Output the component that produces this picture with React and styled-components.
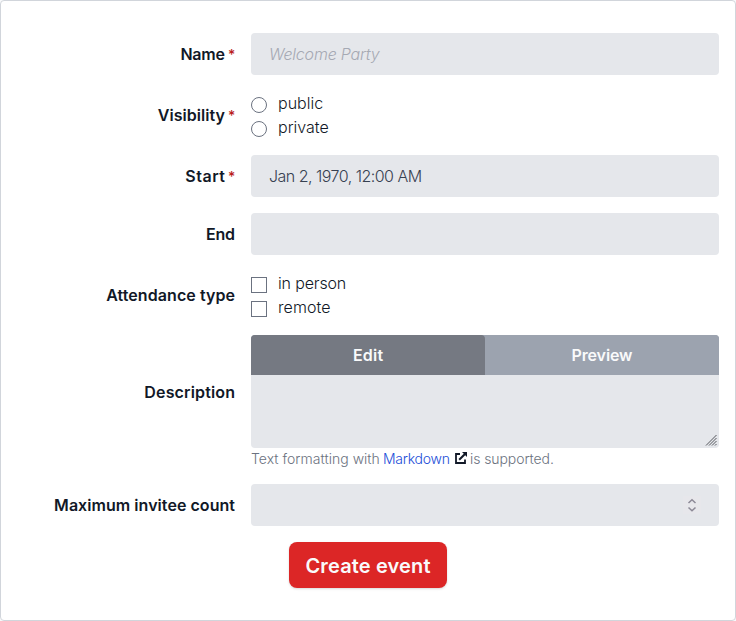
import React from "react";
import styled, { createGlobalStyle } from "styled-components";

const GlobalStyle = createGlobalStyle`
  *, *::before, *::after { box-sizing: border-box; }
  body {
    margin: 0;
    background: #f9fafb;
    color: #111827;
    font-family: Inter, "Liberation Sans", sans-serif;
    font-size: 16px;
    font-weight: 360;
    line-height: 24px;
  }
  input, textarea, button { font: inherit; color: inherit; margin: 0; }
`;

const Card = styled.form`
  display: flex;
  flex-direction: column;
  gap: 16px;
  width: 736px;
  height: 621px;
  padding: 32px 16px;
  border: 1px solid #d1d5db;
  border-radius: 4px;
  background: #fff;
`;

const Row = styled.div`
  display: grid;
  grid-template-columns: 1fr 2fr;
  align-items: center;
`;

const Label = styled.label`
  padding-right: 16px;
  text-align: right;
  font-weight: 600;
  white-space: nowrap;
`;

const Text = styled.span`
  letter-spacing: ${(p) => p.$spacing || 0}px;
  margin-right: ${(p) => -(p.$spacing || 0)}px;
`;

const Star = styled.span`
  display: inline-block;
  width: 7px;
  margin-left: 3px;
  color: #b91c1c;
  font-size: 14px;
  font-weight: 500;
`;

const Input = styled.input`
  display: block;
  width: 100%;
  height: 42px;
  padding: 0 18px;
  border: 0;
  border-radius: 4px;
  outline: 0;
  background: #e5e7eb;
  color: #374151;
  letter-spacing: ${(p) => p.$spacing || 0}px;
  &::placeholder {
    color: #a5a9b3;
    font-style: italic;
    font-weight: 320;
    opacity: 1;
  }
`;

const Options = styled.div`
  display: flex;
  flex-direction: column;
`;

const Option = styled.label`
  display: flex;
  gap: 11px;
  height: 24px;
`;

const Choice = styled.input`
  appearance: none;
  width: 16px;
  height: 16px;
  margin: 6px 0 0;
  border: 1px solid #6b7280;
  border-radius: ${(p) => (p.type === "radio" ? "50%" : "0")};
  background: #fff;
`;

const Tabs = styled.div`
  display: grid;
  grid-template-columns: 1fr 1fr;
  height: 40px;
  border-radius: 4px 4px 0 0;
  background: #9ca3af;
`;

const Tab = styled.button`
  padding: 0;
  border: 0;
  border-radius: 4px 4px 0 0;
  background: ${(p) => (p.$active ? "#757982" : "#9ca3af")};
  color: #f9fafb;
  font-weight: 600;
`;

const EditorFrame = styled.div`
  position: relative;
  height: 73px;
`;

const Editor = styled.textarea`
  display: block;
  width: 100%;
  height: 100%;
  padding: 8px 18px;
  border: 0;
  border-radius: 0 0 4px 4px;
  outline: 0;
  background: #e5e7eb;
  resize: none;
`;

const Grip = styled.svg`
  position: absolute;
  right: 2px;
  bottom: 2px;
  width: 12px;
  height: 12px;
`;

const Field = styled.div`
  display: flex;
  flex-direction: column;
`;

const Described = styled.div`
  display: flex;
  flex-direction: column;
`;

const Help = styled.div`
  display: flex;
  align-items: center;
  height: 20px;
  margin-left: 234px;
  padding-top: 2px;
  color: #6b7280;
  font-size: 14px;
  line-height: 20px;
  white-space: nowrap;
`;

const HelpPart = styled.span`
  width: ${(p) => p.$width}px;
  letter-spacing: ${(p) => p.$spacing}px;
`;

const HelpLink = styled.a`
  width: 72px;
  color: #1d4ed8;
  letter-spacing: ${(p) => p.$spacing}px;
`;

const LinkIcon = styled.svg`
  width: 12px;
  height: 12px;
  margin: -2px 3px 0 0;
`;

const NumberField = styled.div`
  display: flex;
  align-items: center;
  justify-content: flex-end;
  height: 42px;
  padding-right: 18px;
  border-radius: 4px;
  background: #e5e7eb;
`;

const Count = styled.input`
  flex: 1;
  min-width: 0;
  padding: 0 0 0 18px;
  border: 0;
  outline: 0;
  background: transparent;
`;

const Spinner = styled.svg`
  width: 18px;
  height: 18px;
  background: #e7e7eb;
`;

const Submit = styled.button`
  align-self: center;
  width: 158px;
  height: 46px;
  padding: 2px 0 0;
  border: 0;
  border-radius: 8px;
  background: #dc2626;
  box-shadow: 0 1px 3px rgba(0, 0, 0, 0.1), 0 1px 2px rgba(0, 0, 0, 0.06);
  color: #f9fafb;
  font-size: 20px;
  font-weight: 600;
  line-height: 28px;
  white-space: nowrap;
`;

function FormRow({ label, spacing, required, children }) {
  return (
    <Row>
      <Label>
        <Text $spacing={spacing}>{label}</Text>
        {required && <Star>*</Star>}
      </Label>
      {children}
    </Row>
  );
}

function Choices({ type, name, items }) {
  return (
    <Options>
      {items.map(([text, spacing]) => (
        <Option key={text}>
          <Choice type={type} name={name} />
          <Text $spacing={spacing}>{text}</Text>
        </Option>
      ))}
    </Options>
  );
}

export default function App() {
  return (
    <>
      <GlobalStyle />
      <Card>
        <FormRow label="Name" spacing={-0.2} required>
          <Input placeholder="Welcome Party" $spacing={-0.2} />
        </FormRow>
        <FormRow label="Visibility" spacing={0.05} required>
          <Choices type="radio" name="visibility" items={[["public", 0], ["private", 0]]} />
        </FormRow>
        <FormRow label="Start" spacing={0.55} required>
          <Input defaultValue="Jan 2, 1970, 12:00 AM" $spacing={-0.52} />
        </FormRow>
        <FormRow label="End" spacing={-0.2}>
          <Input />
        </FormRow>
        <FormRow label="Attendance type" spacing={0.07}>
          <Choices type="checkbox" name="attendance" items={[["in person", -0.15], ["remote", 0.1]]} />
        </FormRow>
        <Described>
          <FormRow label="Description" spacing={0.15}>
            <Field>
              <Tabs>
                <Tab type="button" $active><Text $spacing={0.2}>Edit</Text></Tab>
                <Tab type="button"><Text $spacing={-0.1}>Preview</Text></Tab>
              </Tabs>
              <EditorFrame>
                <Editor />
                <Grip viewBox="0 0 12 12" stroke="#55575c" strokeWidth="1" fill="none">
                  <path d="M1 11.5L11.5 1M4 11.5L11.5 4M7 11.5L11.5 7M10 11.5L11.5 10" />
                </Grip>
              </EditorFrame>
            </Field>
          </FormRow>
          <Help>
            <HelpPart $width={132} $spacing={0.03}>Text formatting with</HelpPart>
            <HelpLink $spacing={-0.25}>Markdown</HelpLink>
            <LinkIcon viewBox="0 0 12 12" fill="none" stroke="#111827" strokeWidth="1.8">
              <path d="M5 2H1V11H10V7.5" />
              <path d="M4.2 7.8L10 2" strokeWidth="2" />
              <path d="M7 0H12V5Z" fill="#111827" stroke="none" />
            </LinkIcon>
            <HelpPart $width={84} $spacing={-0.08}>is supported.</HelpPart>
          </Help>
        </Described>
        <FormRow label="Maximum invitee count" spacing={0.05}>
          <NumberField>
            <Count />
            <Spinner viewBox="0 0 18 18" fill="none" stroke="#8c8996" strokeWidth="1.5">
              <path d="M5.5 7L9 3.7L12.5 7M5.5 11.5L9 14.8L12.5 11.5" />
            </Spinner>
          </NumberField>
        </FormRow>
        <Submit type="button"><Text $spacing={0.15}>Create event</Text></Submit>
      </Card>
    </>
  );
}
